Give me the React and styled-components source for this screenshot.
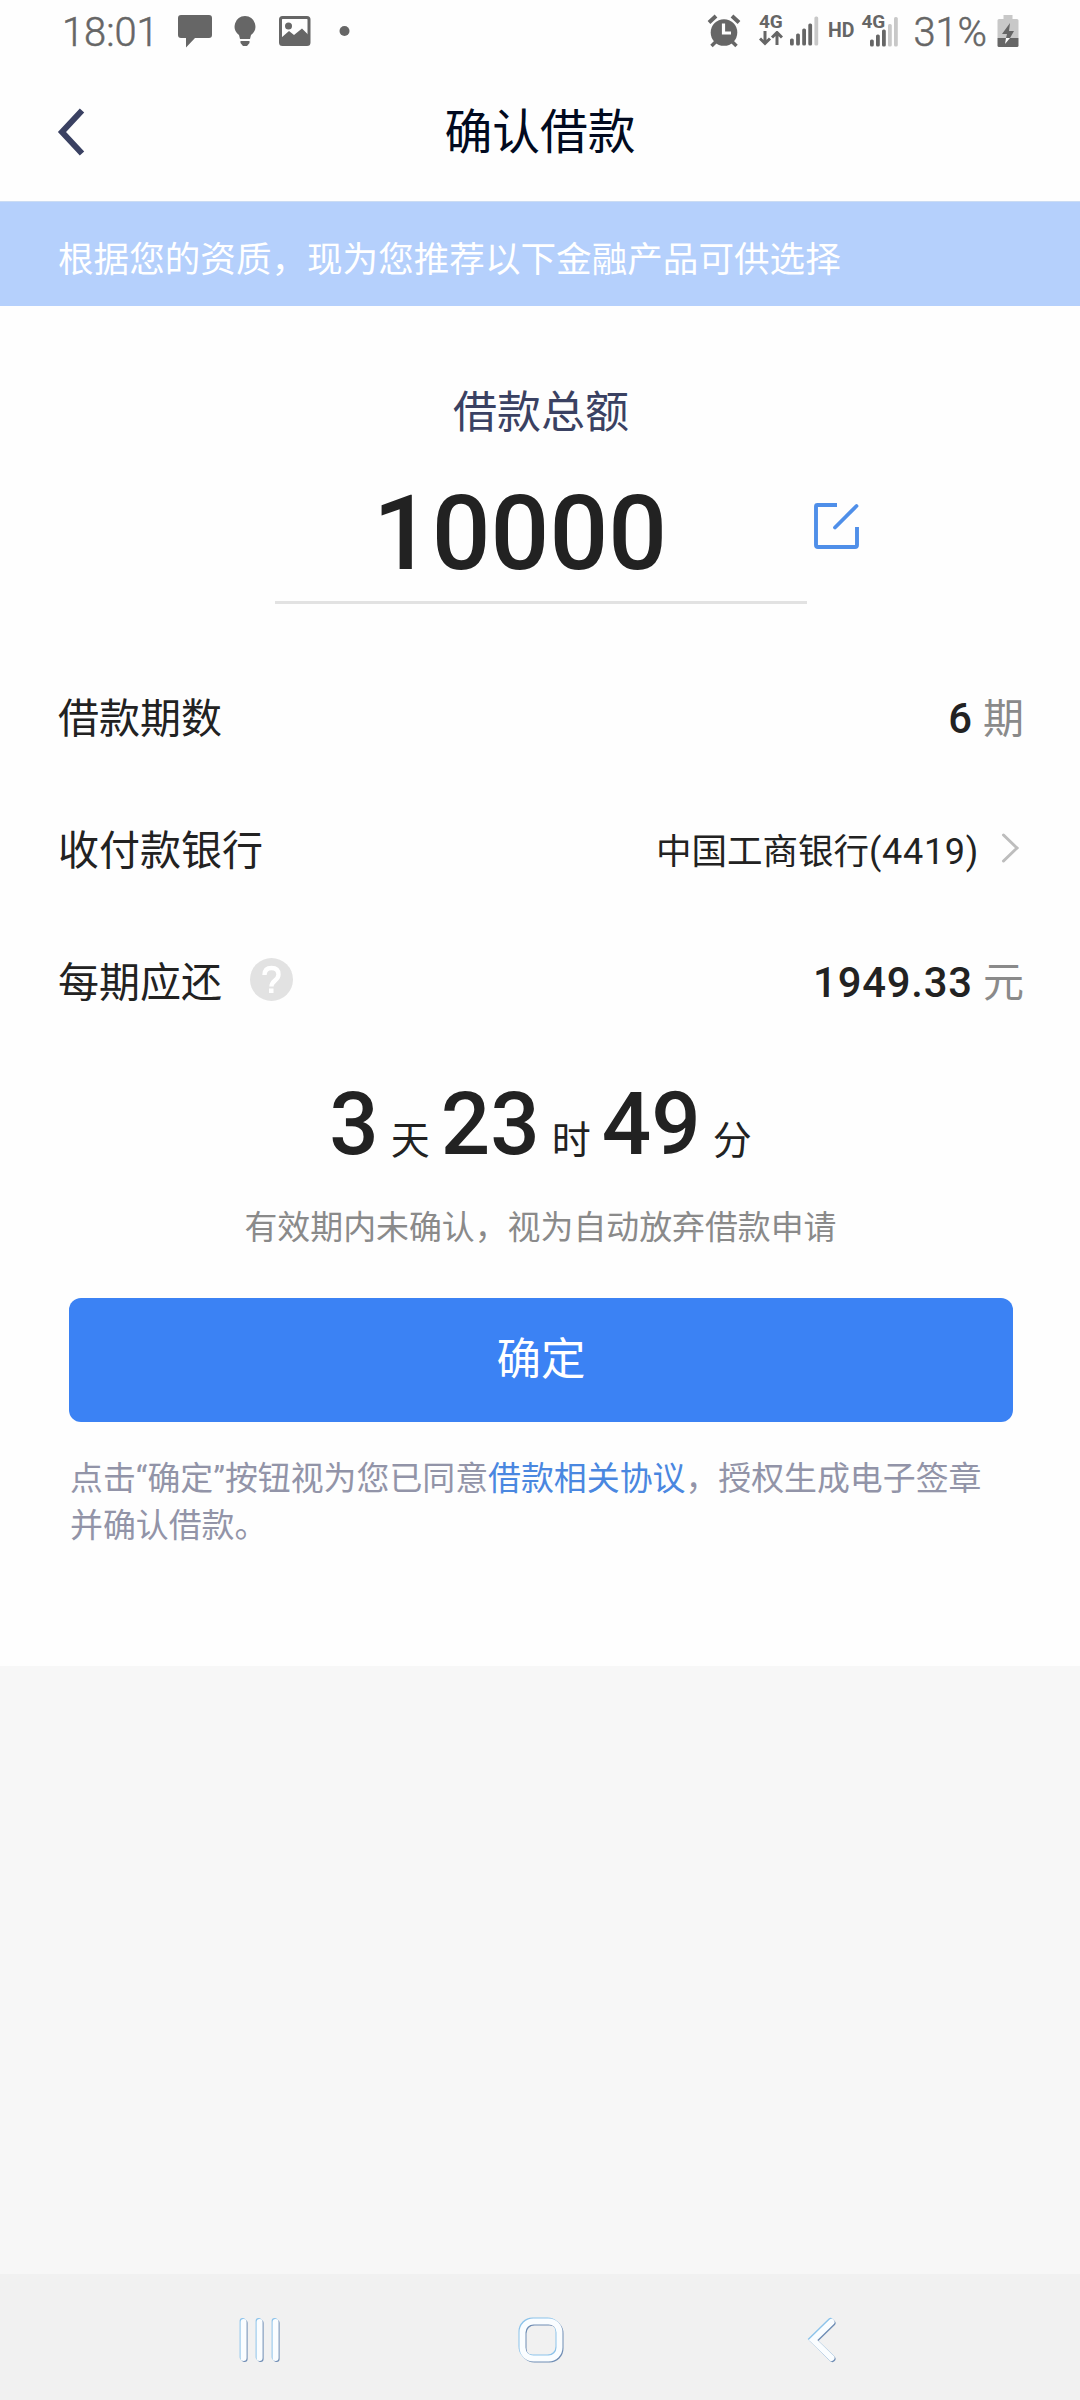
import React, { useState } from 'react'
import styled, { createGlobalStyle } from 'styled-components'

const GlobalStyle = createGlobalStyle`
  body {
    margin: 0;
    background: #f7f7f7;
    font-family: Roboto, 'Noto Sans CJK SC', sans-serif;
    color: #222;
  }
`

const Screen = styled.div`
  display: flex;
  flex-direction: column;

  box-sizing: border-box;
  width: 1080px;
  height: 2400px;

  background: #f7f7f7;
`

const StatusBar = styled.div`
  display: flex;
  justify-content: space-between;

  box-sizing: border-box;
  height: 62px;
  padding: 0 61px 0 62px;

  background: #fefefe;
  color: #666;
`
const StatusGroup = styled.div`
  display: flex;
  align-items: center;
`
const StatusText = styled.span`
  margin-left: ${props => props.$gap || 0}px;
  padding-top: 3px;

  font-size: 39.8px;
  font-weight: 300;
  line-height: 56px;
  -webkit-text-stroke: 0.5px #666;
`
const Tag = styled.span`
  font-size: ${props => props.$size || 19}px;
  font-weight: 700;
  line-height: 18px;
  margin: ${props => props.$margin || 0};
`
const Network = styled.div`
  display: flex;
  flex-direction: column;
  width: 24px;
  height: 36px;
  margin-left: 18px;
`
const StatusIcon = styled.svg`
  flex: none;
  display: block;
  margin-left: ${props => props.$gap || 0}px;
`
const SecondSim = styled.div`
  position: relative;
  width: 38px;
  height: 36px;
  margin-left: 7px;
`
const Overlay = styled.span`
  position: absolute;
  left: 0;
  top: 0;

  font-size: 19px;
  font-weight: 700;
  line-height: 18px;
`

const Header = styled.div`
  display: grid;
  grid-template-columns: 120px 1fr 120px;
  align-items: center;

  height: 139px;

  background: #fefefe;
`
const Back = styled.button`
  display: flex;
  height: 100%;
  padding: 0 0 0 56px;
  align-items: center;

  background: none;
  border: none;
`
const Title = styled.h1`
  margin: 0;
  padding-top: 2px;

  color: #010a20;
  font-size: 47.8px;
  font-weight: 400;
  line-height: 60px;
  text-align: center;
`

const Banner = styled.div`
  box-sizing: border-box;
  height: 105px;
  padding: 13px 58px 0;

  background: #b5d0fc;
  border-top: 1px solid #cbdcf3;
  color: #fff;
  font-size: 35.6px;
  line-height: 90px;
`

const Card = styled.div`
  display: flex;
  flex-direction: column;

  box-sizing: border-box;
  height: 1360px;
  padding-top: 77px;

  background: #fefefe;
`
const AmountLabel = styled.div`
  padding-left: 2px;

  color: #3a4162;
  font-size: 44px;
  line-height: 61px;
  text-align: center;
`
const AmountRow = styled.div`
  display: flex;
  align-items: flex-start;

  height: 160px;
  padding-left: 275px;
`
const Amount = styled.div`
  box-sizing: border-box;
  width: 532px;
  height: 160px;
  padding-right: 42px;

  border-bottom: 3px solid #e2e2e2;
  font-size: 103.5px;
  font-weight: 500;
  line-height: 179px;
  text-align: center;
`
const Edit = styled.button`
  margin: 57px 0 0 5px;
  padding: 0;

  background: none;
  border: none;
`

const Rows = styled.div`
  margin-top: 49px;
`
const Row = styled.div`
  display: flex;
  align-items: center;

  height: 132px;
  padding: 0 56px 0 58px;

  font-size: 41px;
  line-height: 60px;
`
const Label = styled.div`
  display: flex;
  align-items: center;
  flex: 1;
`
const Help = styled.svg`
  margin: -7px 0 0 28px;
`
const Value = styled.div`
  white-space: pre;
`
const Figure = styled.span`
  font-size: 41.8px;
  font-weight: 500;
  letter-spacing: 0.8px;
`
const Unit = styled.span`
  color: #8a8a8a;
`
const Bank = styled.div`
  display: flex;
  align-items: center;
  padding-top: 1px;

  font-size: 35.5px;
`
const Account = styled.span`
  font-size: 36px;
  letter-spacing: 0.7px;
`
const Chevron = styled.svg`
  margin: -7px 4px 0 22px;
`

const Countdown = styled.div`
  display: flex;
  justify-content: center;
  align-items: baseline;

  height: 110px;
  margin-top: 20px;
  padding-left: 1px;

  line-height: 110px;
`
const Num = styled.span`
  font-size: 87px;
  font-weight: 500;
`
const TimeUnit = styled.span`
  margin: 0 11px 0 12px;
  font-size: 39px;

  &:last-child {
    margin-right: 0;
  }
`
const Note = styled.div`
  margin-top: 26px;
  padding-left: 1px;

  color: #8a8a8a;
  font-size: 32.9px;
  line-height: 46px;
  text-align: center;
`
const Submit = styled.button`
  height: 124px;
  margin: 47px 67px 0 69px;
  padding: 0;

  background: #3b82f4;
  border: none;
  border-radius: 12px;
  color: #fff;
  font-family: inherit;
  font-size: 44.5px;
  line-height: 124px;
`
const Agreement = styled.p`
  margin: 33px 80px 0 70px;

  color: #9294a8;
  font-size: 32.9px;
  line-height: 47px;
`
const Link = styled.a`
  color: #4a87e0;
`

const NavBar = styled.div`
  display: flex;
  align-items: center;

  box-sizing: border-box;
  height: 126px;
  margin-top: auto;
  padding: 5px 0 0 233px;

  background: #f1f1f1;
`
const NavIcon = styled.svg`
  overflow: visible;
  margin-right: ${props => props.$gap || 0}px;
  filter: drop-shadow(1.1px 1.2px 0.7px #6f8db4) drop-shadow(-0.8px -0.7px 0.7px #8cc3ea);
`

const ROWS = [
  { label: '借款期数', value: '6', unit: '期' },
  { label: '收付款银行', bank: '中国工商银行', account: '(4419)' },
  { label: '每期应还', value: '1949.33', unit: '元', help: true }
]

const TIME = [['3', '天'], ['23', '时'], ['49', '分']]

const Signal = ({ level, ...rest }) => (
  <StatusIcon width='30' height='30' viewBox='0 0 30 30' {...rest}>
    {[7, 12, 17, 22, 29].map((h, i) => (
      <rect key={h} x={1 + i * 6.1} y={29.5 - h} width='3.8' height={h} rx='1.6'
        fill={i < level ? '#666' : '#c8c8c8'} />
    ))}
  </StatusIcon>
)

const Status = () => (
  <StatusBar>
    <StatusGroup>
      <StatusText>18:01</StatusText>
      <StatusIcon $gap={19} width='34' height='34' viewBox='0 0 34 34'>
        <path d='M3 1h28q3 0 3 3v17q0 3-3 3H17L8 33.500V24H3q-3 0-3-3V4q0-3 3-3z' fill='#666' />
      </StatusIcon>
      <StatusIcon $gap={22} width='22' height='32' viewBox='0 0 22 32'>
        <path d='M11 1a10.500 10.500 0 0 1 6 19l-1 4H6l-1-4A10.500 10.500 0 0 1 11 1zM6.500 26h9v2l-2.500 3H9l-2.500-3z' fill='#666' />
      </StatusIcon>
      <StatusIcon $gap={23} width='32' height='30' viewBox='0 0 32 30'>
        <rect x='1.5' y='1.500' width='28.500' height='27' rx='2' fill='none' stroke='#666' strokeWidth='3' />
        <circle cx='9.500' cy='10' r='3.500' fill='#666' />
        <path d='M2 22l8-7 5 4 8-6.500 7 7V28H2z' fill='#666' />
      </StatusIcon>
      <StatusIcon $gap={28} width='11' height='11' viewBox='0 0 11 11'>
        <circle cx='5.500' cy='5' r='5' fill='#666' />
      </StatusIcon>
    </StatusGroup>
    <StatusGroup>
      <StatusIcon width='34' height='34' viewBox='0 0 34 34'>
        <circle cx='17' cy='18.500' r='13.300' fill='#666' />
        <path d='M2 8.500l7-6.500M32 8.500L25 2' stroke='#666' strokeWidth='4' />
        <path d='M4.500 32l5-5M29.500 32l-5-5' stroke='#666' strokeWidth='3.500' />
        <path d='M16.500 9.500v9.500H24' fill='none' stroke='#fefefe' strokeWidth='3.200' />
      </StatusIcon>
      <Network>
        <Tag>4G</Tag>
        <svg width='24' height='15' viewBox='0 0 24 15'>
          <path d='M6 0v12M1 7.500l5 5 5-5M18 14V2M13 6.500l5-5 5 5' fill='none' stroke='#666' strokeWidth='3' />
        </svg>
      </Network>
      <Signal level={4} $gap={6} />
      <Tag $size={19.5} $margin='0 0 0 9px'>HD</Tag>
      <SecondSim>
        <StatusIcon $gap={8} width='30' height='34' viewBox='0 0 30 34'>
          <rect x='1' y='26.500' width='3.800' height='7' rx='1.600' fill='#666' />
          <rect x='7' y='21.500' width='3.800' height='12' rx='1.600' fill='#666' />
          <rect x='13' y='16.500' width='3.800' height='17' rx='1.600' fill='#666' />
          <rect x='19' y='11' width='3.800' height='22.500' rx='1.600' fill='#c8c8c8' />
          <rect x='25' y='4' width='3.800' height='29.500' rx='1.600' fill='#c8c8c8' />
        </StatusIcon>
        <Overlay>4G</Overlay>
      </SecondSim>
      <StatusText $gap={14}>31%</StatusText>
      <StatusIcon $gap={10} width='22' height='34' viewBox='0 0 22 34'>
        <path d='M6.500 1h9v4H20q1.500 0 1.500 1.500V24H.5V6.500Q.5 5 2 5h4.500z' fill='#c8c8c8' />
        <path d='M.5 24h21v7.500Q21.500 33 20 33H2Q.5 33 .5 31.500z' fill='#666' />
        <path d='M13 9L5 20h5l-1 4h4l4-7h-5z' fill='#666' />
        <path d='M9 24h4l-5 6z' fill='#fefefe' />
      </StatusIcon>
    </StatusGroup>
  </StatusBar>
)

const App = () => {
  const [amount] = useState('10000')

  return (
    <Screen>
      <GlobalStyle />
      <Status />
      <Header>
        <Back>
          <svg width='30' height='48' viewBox='0 0 30 48'>
            <path d='M26 2.500L6 24l20 21.500' fill='none' stroke='#3a4162' strokeWidth='6' />
          </svg>
        </Back>
        <Title>确认借款</Title>
      </Header>
      <Banner>根据您的资质，现为您推荐以下金融产品可供选择</Banner>
      <Card>
        <AmountLabel>借款总额</AmountLabel>
        <AmountRow>
          <Amount>{amount}</Amount>
          <Edit>
            <svg width='50' height='50' viewBox='0 0 50 50'>
              <path d='M25 4H5.500Q4 4 4 5.500V44q0 2 2 2h37q2 0 2-2V26' fill='none' stroke='#4f8fe9' strokeWidth='3.900' />
              <path d='M23 26.500L44.500 5' fill='none' stroke='#4f8fe9' strokeWidth='3.800' strokeLinecap='round' />
            </svg>
          </Edit>
        </AmountRow>
        <Rows>
          {ROWS.map(row => (
            <Row key={row.label}>
              <Label>
                {row.label}
                {row.help && (
                  <Help width='43' height='43' viewBox='0 0 43 43'>
                    <circle cx='21.500' cy='21.500' r='21.500' fill='#e2e2e2' />
                    <path d='M14.500 17q0-7 7-7t7 6.500q0 3-3.500 6t-3.500 6' fill='none' stroke='#fff' strokeWidth='4.400' />
                    <rect x='19' y='30.500' width='4.500' height='4.500' fill='#fff' />
                  </Help>
                )}
              </Label>
              {row.bank ? (
                <Bank>
                  {row.bank}
                  <Account>{row.account}</Account>
                  <Chevron width='19' height='32' viewBox='0 0 19 32'>
                    <path d='M2.500 3l13.500 13L2.500 29' fill='none' stroke='#bdbdbd' strokeWidth='3' strokeLinecap='round' />
                  </Chevron>
                </Bank>
              ) : (
                <Value>
                  <Figure>{row.value}</Figure> <Unit>{row.unit}</Unit>
                </Value>
              )}
            </Row>
          ))}
        </Rows>
        <Countdown>
          {TIME.map(([num, unit]) => (
            <React.Fragment key={unit}>
              <Num>{num}</Num>
              <TimeUnit>{unit}</TimeUnit>
            </React.Fragment>
          ))}
        </Countdown>
        <Note>有效期内未确认，视为自动放弃借款申请</Note>
        <Submit>确定</Submit>
        <Agreement>
          点击“确定”按钮视为您已同意<Link>借款相关协议</Link>，授权生成电子签章并确认借款。
        </Agreement>
      </Card>
      <NavBar>
        <NavIcon $gap={232} width='52' height='48' viewBox='0 0 52 48'>
          <path d='M10.600 6v36M26.600 6v36M42.600 6v36' stroke='#fafdff' strokeWidth='6' strokeLinecap='round' />
        </NavIcon>
        <NavIcon $gap={242} width='48' height='48' viewBox='0 0 48 48'>
          <rect x='5.500' y='5.500' width='37' height='37' rx='11' fill='none' stroke='#fafdff' strokeWidth='6' />
        </NavIcon>
        <NavIcon width='32' height='48' viewBox='0 0 32 48'>
          <path d='M24.500 6L6 24l18.500 18' fill='none' stroke='#fafdff' strokeWidth='6' strokeLinecap='round' />
        </NavIcon>
      </NavBar>
    </Screen>
  )
}

export default App
